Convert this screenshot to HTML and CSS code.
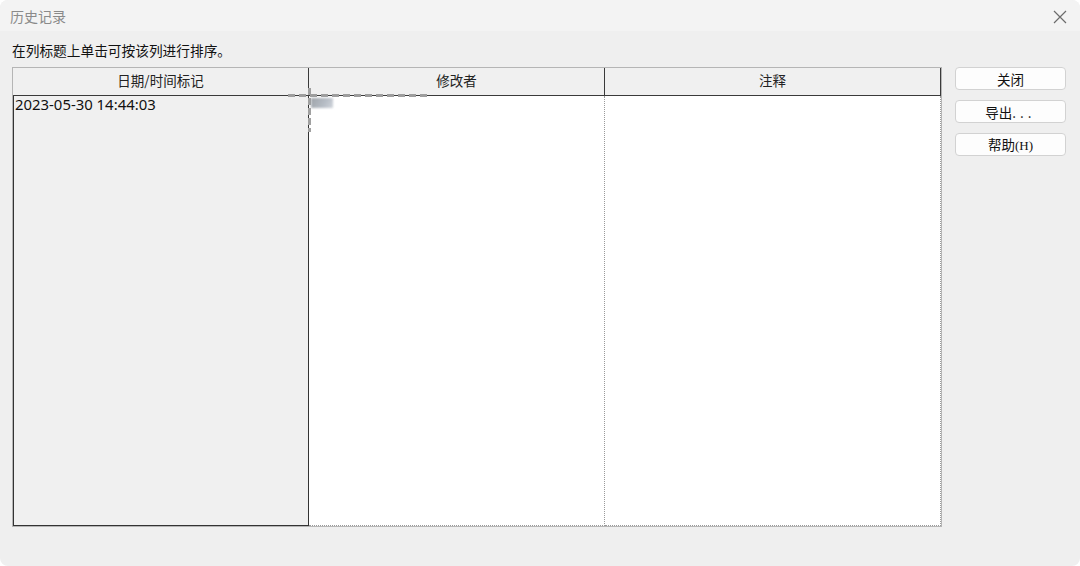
FILE: index.html
```html
<!DOCTYPE html>
<html lang="zh-CN">
<head>
  <meta charset="UTF-8" />
  <meta name="viewport" content="width=device-width, initial-scale=1.0" />
  <title>历史记录</title>
  <link rel="stylesheet" href="styles.css">
</head>
<body>
  <div class="window">
    <div class="titlebar">
      <span class="title">历史记录</span>
      <svg class="close" width="14" height="14" viewBox="0 0 14 14">
        <path d="M1 1 L13 13 M13 1 L1 13" stroke="#6b6b6b" stroke-width="1.2" fill="none" />
      </svg>
    </div>

    <div class="content">
      <p class="hint">在列标题上单击可按该列进行排序。</p>
      <div class="main">
        <div class="grid">
          <div class="head">
            <div class="hcell">日期/时间标记</div>
            <div class="hcell">修改者</div>
            <div class="hcell last">注释</div>
          </div>
          <div class="rows">
            <div class="col first">
              <div class="cell">2023-05-30 14:44:03</div>
            </div>
            <div class="col"></div>
            <div class="col last"></div>
          </div>
          <!-- redacted editor name left over in the screenshot -->
          <div class="smudge">
            <span class="dash-h"></span>
            <span class="dash-v"></span>
            <span class="blob"></span>
          </div>
        </div>

        <div class="buttons">
          <button>关闭</button>
          <button>导出<span class="dots">...</span></button>
          <button>帮助<span class="key">(H)</span></button>
        </div>
      </div>
    </div>
  </div>
</body>
</html>
```

FILE: styles.css
```css
html, body {
  margin: 0;
  padding: 0;
  background: #ffffff;
}
body {
  font-family: "Noto Sans", "Noto Sans CJK SC", sans-serif;
  color: #1a1a1a;
}
.window {
  width: 1080px;
  height: 566px;
  background: #efefef;
  border-radius: 8px;
  overflow: hidden;
  display: flex;
  flex-direction: column;
}
.titlebar {
  height: 31px;
  background: #f3f3f3;
  display: flex;
  align-items: center;
  justify-content: space-between;
  padding: 0 13px 0 10px;
}
.title {
  font-family: "Noto Sans CJK SC", sans-serif;
  font-size: 14px;
  color: #8a8a8a;
}
.close {
  margin-top: 2px;
}
.content {
  padding: 9px 0 0 12px;
}
.hint {
  margin: 0 0 7px 0;
  font-family: "Noto Sans CJK SC", sans-serif;
  font-size: 13.7px;
  line-height: 20px;
  color: #111;
}
.main {
  display: flex;
  align-items: flex-start;
  gap: 13px;
}
.grid {
  position: relative;
  width: 928px;
  height: 458px;
  border: 1px solid #b5b5b5;
  display: flex;
  flex-direction: column;
}
.head {
  display: grid;
  grid-template-columns: 296px 296px 336px;
  height: 27px;
  border-bottom: 1px solid #3a3a3a;
  background: #f0f0f0;
}
.hcell {
  border-right: 1px solid #3a3a3a;
  text-align: center;
  font-family: "Noto Sans CJK SC", sans-serif;
  font-size: 13.5px;
  line-height: 25px;
  color: #222;
}
.rows {
  flex: 1;
  display: grid;
  grid-template-columns: 296px 296px 336px;
}
.col {
  background: #ffffff;
  border-right: 1px dotted #9a9a9a;
  border-bottom: 1px dotted #9a9a9a;
}
.col.first {
  background: #f0f0f0;
  border: 1px solid #333;
  border-top: none;
}
.cell {
  padding: 0 0 0 1px;
  font-size: 14.9px;
  line-height: 17px;
  color: #111;
}
.smudge {
  position: absolute;
  left: 275px;
  top: 20px;
  width: 150px;
  height: 46px;
}
.dash-h {
  position: absolute;
  left: 0;
  top: 6px;
  width: 143px;
  height: 3px;
  background: repeating-linear-gradient(90deg, #9e9e9e 0 7px, transparent 7px 11px);
}
.dash-v {
  position: absolute;
  left: 20px;
  top: 0;
  width: 3px;
  height: 44px;
  background: repeating-linear-gradient(180deg, #a0a0a0 0 7px, transparent 7px 10px);
}
.blob {
  position: absolute;
  left: 23px;
  top: 10px;
  width: 22px;
  height: 10px;
  background: linear-gradient(120deg, #8e949b, #aab2bc 60%, #c9ced6);
  filter: blur(1px);
  opacity: 0.85;
}
.buttons {
  display: flex;
  flex-direction: column;
  gap: 10px;
}
.buttons button {
  width: 111px;
  height: 23px;
  padding: 0;
  background: #fdfdfd;
  border: 1px solid #d2d2d2;
  border-radius: 4px;
  font-family: "Noto Sans CJK SC", sans-serif;
  font-size: 13.5px;
  line-height: 20px;
  color: #111;
  cursor: pointer;
}
.dots {
  letter-spacing: 4px;
}
.key {
  font-family: "Liberation Serif", serif;
  font-size: 13px;
}
```
